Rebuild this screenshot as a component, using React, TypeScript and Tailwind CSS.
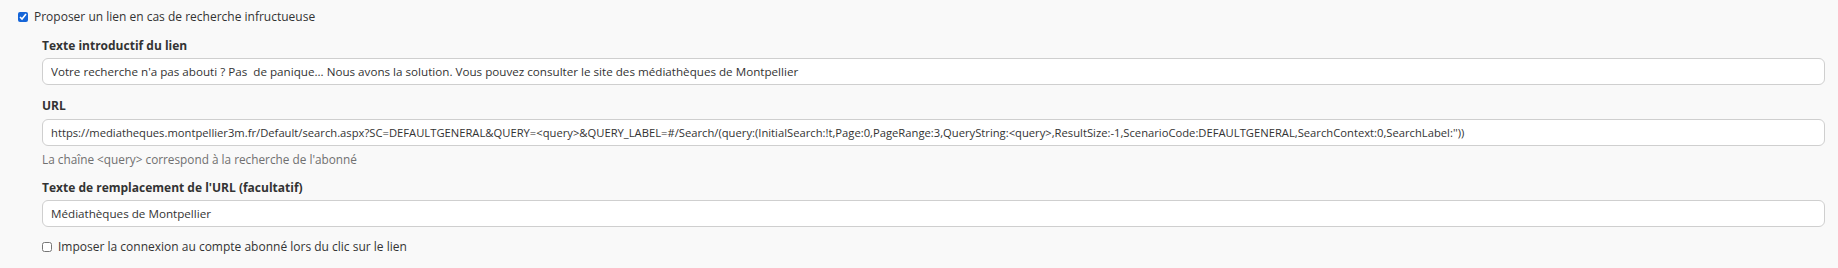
export default function App() {
    const url =
        "https://mediatheques.montpellier3m.fr/Default/search.aspx?SC=DEFAULTGENERAL&QUERY=<query>&QUERY_LABEL=#/Search/(query:(InitialSearch:!t,Page:0,PageRange:3,QueryString:<query>,ResultSize:-1,ScenarioCode:DEFAULTGENERAL,SearchContext:0,SearchLabel:''))";

    return (
        <div className="w-[1838px] h-[268px] bg-[#f9f9f9] text-[#333] text-[12px] font-['Open_Sans',sans-serif] pl-[18px] pr-[13px] pt-[9px]">
            {/* Main toggle */}
            <label className="flex items-center gap-[6px] h-[16px]">
                <input type="checkbox" defaultChecked className="w-[10px] h-[10px] m-0 accent-[#1565d8]" />
                <span>Proposer un lien en cas de recherche infructueuse</span>
            </label>

            {/* Sub options */}
            <div className="pl-[24px] pt-[13px] flex flex-col">
                <p className="font-bold leading-[16px]">Texte introductif du lien</p>
                <input
                    className="mt-[4px] h-[27px] w-full bg-white border border-[#cfcfcf] rounded-[6px] px-[8px] text-[11.65px] outline-none"
                    defaultValue="Votre recherche n'a pas abouti ? Pas  de panique... Nous avons la solution. Vous pouvez consulter le site des médiathèques de Montpellier"
                />

                <p className="font-bold leading-[16px] mt-[13px]">URL</p>
                <input
                    className="mt-[5px] h-[27px] w-full bg-white border border-[#cfcfcf] rounded-[6px] px-[8px] text-[11.22px] outline-none"
                    defaultValue={url}
                />
                <p className="text-[#707070] text-[11.8px] leading-[16px] mt-[5px]">La chaîne &lt;query&gt; correspond à la recherche de l'abonné</p>

                <p className="font-bold leading-[16px] mt-[13px]">Texte de remplacement de l'URL (facultatif)</p>
                <input
                    className="mt-[4px] h-[27px] w-full bg-white border border-[#cfcfcf] rounded-[6px] px-[8px] text-[11.65px] outline-none"
                    defaultValue="Médiathèques de Montpellier"
                />

                <label className="flex items-center gap-[6px] h-[16px] mt-[12px]">
                    <input type="checkbox" className="w-[10px] h-[10px] m-0" />
                    <span>Imposer la connexion au compte abonné lors du clic sur le lien</span>
                </label>
            </div>
        </div>
    );
}
